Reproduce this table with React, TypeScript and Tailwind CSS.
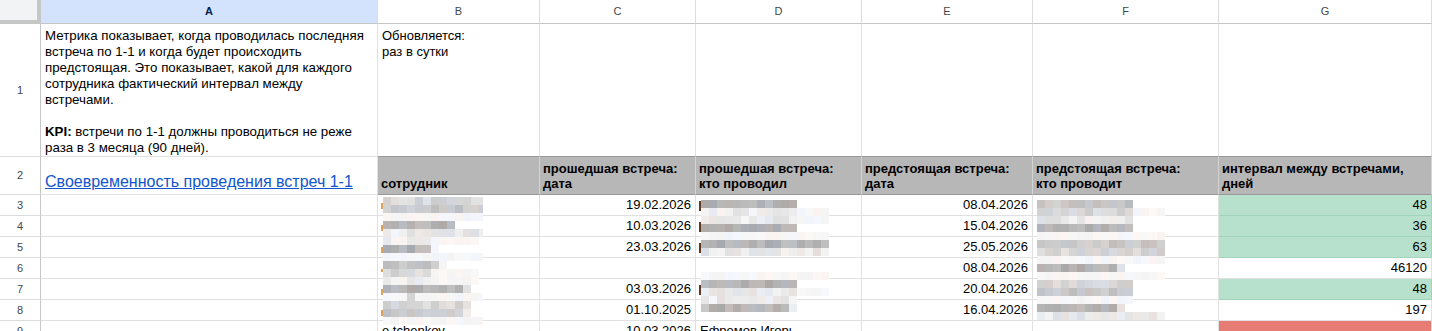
import React from "react";

const COLS = "grid grid-cols-[41px_337px_162px_156px_166px_171px_186px_213px]";
const GRID = "border-r border-b border-[#e1e1e1] overflow-hidden whitespace-nowrap";

const BASE: Record<string, number> = { f: 246, l: 234, m: 216, g: 199, d: 180 };

function rnd(i: number, j: number, s: number) {
  const x = Math.sin(i * 12.9898 + j * 78.233 + s * 37.719) * 43758.5453;
  return x - Math.floor(x);
}

function clamp(n: number) {
  return Math.max(0, Math.min(252, Math.round(n)));
}

type Extra = { x: number; y: number; w: number; h: number; c: string };

function Mosaic({
  rows,
  seed,
  ox,
  width,
  left,
  top,
  extras,
}: {
  rows: string[];
  seed: number;
  ox: number;
  width: number;
  left: string;
  top: string;
  extras: Extra[];
}) {
  const rects: React.ReactNode[] = [];
  rows.forEach((row, j) => {
    row.split("").forEach((ch, i) => {
      if (ch === " ") return;
      const base = BASE[ch];
      const v = (rnd(i, j, seed) - 0.5) * (ch === "f" ? 5 : 24);
      const t = rnd(j + 7, i + 3, seed + 5);
      let r = base + v;
      const g = base + v;
      let b = base + v;
      if (t < 0.3) {
        r += 5;
        b -= 3;
      } else if (t > 0.75) {
        b += 7;
        r -= 2;
      }
      rects.push(
        <rect
          key={`${i}-${j}`}
          x={ox + i * 8}
          y={j * 8}
          width={8}
          height={8}
          fill={`rgb(${clamp(r)},${clamp(g)},${clamp(b)})`}
        />
      );
    });
  });
  return (
    <svg
      className={`absolute ${left} ${top}`}
      width={width}
      height={rows.length * 8}
      shapeRendering="crispEdges"
    >
      {extras.map((e, k) => (
        <rect key={`e${k}`} x={e.x} y={e.y} width={e.w} height={e.h} fill={e.c} />
      ))}
      {rects}
    </svg>
  );
}

const B_ROWS = [
  "mmmmmmmmmmmmm",
  "gggggggggggmm",
  "fffffffffffff",
  "ddddddddd",
  "lllllllllllll",
  "llllllffffff",
  "ddddddf",
  "fffffffffffff",
  "gggggggf",
  "mmmmmmffffff",
  "llllllffffff",
  "ddddddddddm",
  "fffmfffffffff",
  "mmmmmmmmmml",
  "gggggggggml",
  "fffffffffffff",
];

const D_ROWS = [
  "dddddddddddd",
  "llllllllllllffff",
  "llllllllllllffff",
  "dddddddddddd",
  "ffffffffffffffff",
  "dddddddddddddddd",
  "llllllllllllllll",
  "",
  "",
  "ffffffffffffffff",
  "dddddddddddd",
  "llllllllllllffff",
  "lllllllllllf",
  "gddddddddddl",
];

const F_ROWS = [
  "gggggggggggg",
  "mmmmmmmmmmmmffff",
  "llllllllllll",
  "dddddddddddd",
  "ffffffffffffffff",
  "gggggggggggggggg",
  "mmmmmmmmmmmmmmmm",
  "ffffffffffffffff",
  "ddddddddddl",
  "ffffffffffffffff",
  "mmmmmmmmmmmm",
  "gggggggggggg",
  "ffffffffffff",
  "ddddddddddl",
  "llllllllllllllll",
];

const ORANGE = "#dca25a";
const BROWN = "#5b3a26";

type DataRow = {
  n: number;
  b?: string;
  c?: string;
  d?: string;
  e?: string;
  g?: string;
  gBg?: "green" | "red" | "white";
};

const DATA: DataRow[] = [
  { n: 3, c: "19.02.2026", e: "08.04.2026", g: "48", gBg: "green" },
  { n: 4, c: "10.03.2026", e: "15.04.2026", g: "36", gBg: "green" },
  { n: 5, c: "23.03.2026", e: "25.05.2026", g: "63", gBg: "green" },
  { n: 6, e: "08.04.2026", g: "46120", gBg: "white" },
  { n: 7, c: "03.03.2026", e: "20.04.2026", g: "48", gBg: "green" },
  { n: 8, c: "01.10.2025", e: "16.04.2026", g: "197", gBg: "white" },
  { n: 9, b: "e.tchenkov", c: "10.03.2026", d: "Ефремов Игорь", gBg: "red" },
];

function RowHead({ n, h }: { n: number; h: string }) {
  return (
    <div
      className={`${h} bg-white border-r border-b border-r-[#c4c7c5] border-b-[#dadce0] flex items-center justify-center text-[11px] text-[#444746]`}
    >
      {n}
    </div>
  );
}

function ColHead({ label, active }: { label: string; active?: boolean }) {
  return (
    <div
      className={`h-[24px] border-r border-b border-r-[#dadce0] border-b-[#c4c7c5] flex items-center justify-center text-[11px] ${
        active ? "bg-[#d3e3fd] text-[#041e49] font-bold" : "bg-white text-[#444746]"
      }`}
    >
      {label}
    </div>
  );
}

function HeadCell({ children }: { children: React.ReactNode }) {
  return (
    <div
      className={`h-[38px] bg-[#b7b7b7] border-r border-b border-r-[#d4d4d4] border-b-[#999999] px-[3px] pb-[3px] flex flex-col justify-end text-[13px] leading-[15px] font-bold text-black whitespace-nowrap overflow-hidden`}
    >
      {children}
    </div>
  );
}

export default function App() {
  return (
    <div className="w-[1432px] h-[331px] overflow-hidden bg-white font-['Liberation_Sans',Arial,sans-serif] text-[13px] text-black">
      <div className="relative">
        {/* column header row */}
        <div className={COLS}>
          <div className="h-[24px] bg-[#f1f3f4] border-r-4 border-b-4 border-[#c4c7c5]" />
          <ColHead label="A" active />
          <ColHead label="B" />
          <ColHead label="C" />
          <ColHead label="D" />
          <ColHead label="E" />
          <ColHead label="F" />
          <ColHead label="G" />
        </div>

        {/* row 1 */}
        <div className={COLS}>
          <RowHead n={1} h="h-[133px]" />
          <div className={`h-[133px] ${GRID} px-[4px] pt-[4px] text-[13.3px] leading-[16px]`}>
            Метрика показывает, когда проводилась последняя
            <br />
            встреча по 1-1 и когда будет происходить
            <br />
            предстоящая. Это показывает, какой для каждого
            <br />
            сотрудника фактический интервал между
            <br />
            встречами.
            <br />
            <br />
            <b>KPI:</b> встречи по 1-1 должны проводиться не реже
            <br />
            раза в 3 месяца (90 дней).
          </div>
          <div className={`h-[133px] ${GRID} border-b-[#999999] px-[4px] pt-[4px] leading-[16px]`}>
            Обновляется:
            <br />
            раз в сутки
          </div>
          <div className={`h-[133px] ${GRID} border-b-[#999999]`} />
          <div className={`h-[133px] ${GRID} border-b-[#999999]`} />
          <div className={`h-[133px] ${GRID} border-b-[#999999]`} />
          <div className={`h-[133px] ${GRID} border-b-[#999999]`} />
          <div className={`h-[133px] ${GRID} border-b-[#999999]`} />
        </div>

        {/* row 2 */}
        <div className={COLS}>
          <RowHead n={2} h="h-[38px]" />
          <div className={`h-[38px] ${GRID} px-[4px] pb-[3px] flex items-end`}>
            <span className="text-[16px] leading-[19px] text-[#1155cc] underline">
              Своевременность проведения встреч 1-1
            </span>
          </div>
          <HeadCell>
            <span>сотрудник</span>
          </HeadCell>
          <HeadCell>
            <span>прошедшая встреча:</span>
            <span>дата</span>
          </HeadCell>
          <HeadCell>
            <span>прошедшая встреча:</span>
            <span>кто проводил</span>
          </HeadCell>
          <HeadCell>
            <span>предстоящая встреча:</span>
            <span>дата</span>
          </HeadCell>
          <HeadCell>
            <span>предстоящая встреча:</span>
            <span>кто проводит</span>
          </HeadCell>
          <HeadCell>
            <span>интервал между встречами,</span>
            <span>дней</span>
          </HeadCell>
        </div>

        {/* data rows */}
        {DATA.map((r) => {
          const gCls =
            r.gBg === "green"
              ? "bg-[#b7e1cd] border-b-[#a2d3bb] border-r-[#a2d3bb]"
              : r.gBg === "red"
              ? "bg-[#e67c73]"
              : "bg-white";
          return (
            <div key={r.n} className={COLS}>
              <RowHead n={r.n} h="h-[21px]" />
              <div className={`h-[21px] ${GRID}`} />
              <div className={`h-[21px] ${GRID} px-[4px] leading-[20px]`}>{r.b}</div>
              <div className={`h-[21px] ${GRID} px-[4px] leading-[20px] text-right`}>{r.c}</div>
              <div className={`h-[21px] ${GRID} px-[4px] leading-[20px]`}>{r.d}</div>
              <div className={`h-[21px] ${GRID} px-[4px] leading-[20px] text-right`}>{r.e}</div>
              <div className={`h-[21px] ${GRID} px-[4px] leading-[20px]`} />
              <div className={`h-[21px] ${GRID} ${gCls} px-[4px] leading-[20px] text-right`}>
                {r.g}
              </div>
            </div>
          );
        })}

        {/* privacy mosaics lying over the name cells */}
        <Mosaic
          rows={B_ROWS}
          seed={1}
          ox={2}
          width={102}
          left="left-[381px]"
          top="top-[197px]"
          extras={[
            { x: 0, y: 6, w: 2, h: 6, c: ORANGE },
            { x: 0, y: 28, w: 2, h: 6, c: ORANGE },
            { x: 0, y: 50, w: 2, h: 6, c: ORANGE },
            { x: 0, y: 72, w: 2, h: 3, c: ORANGE },
            { x: 0, y: 92, w: 2, h: 6, c: ORANGE },
            { x: 0, y: 113, w: 2, h: 6, c: ORANGE },
          ]}
        />
        <Mosaic
          rows={D_ROWS}
          seed={2}
          ox={2}
          width={132}
          left="left-[699px]"
          top="top-[200px]"
          extras={[
            { x: 0, y: 1, w: 2, h: 10, c: BROWN },
            { x: 0, y: 22, w: 2, h: 10, c: BROWN },
            { x: 0, y: 43, w: 2, h: 10, c: BROWN },
            { x: 0, y: 85, w: 2, h: 10, c: BROWN },
            { x: 3, y: 108, w: 5, h: 2, c: "#444" },
            { x: 6, y: 108, w: 2, h: 7, c: "#444" },
          ]}
        />
        <Mosaic
          rows={F_ROWS}
          seed={3}
          ox={0}
          width={132}
          left="left-[1037px]"
          top="top-[200px]"
          extras={[]}
        />
      </div>
    </div>
  );
}
